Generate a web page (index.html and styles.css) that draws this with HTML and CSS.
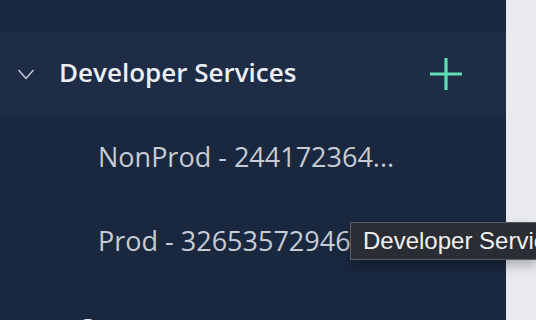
FILE: index.html
```html
<!DOCTYPE html>
<html lang="en">
<head>
  <meta charset="UTF-8" />
  <title>Accounts</title>
  <link rel="stylesheet" href="styles.css">
</head>
<body>

  <div class="sidebar">
    <div class="tree">

      <div class="section-end"></div>

      <div class="group-row active">
        <span class="chevron">
          <svg width="18" height="12" viewBox="0 0 18 12"><path d="M1.5 2 L9 10.5 L16.5 2" fill="none" stroke="#c9ced8" stroke-width="1.4"/></svg>
        </span>
        <span class="group-name">Developer Services</span>
        <button class="add-btn" title="Add account">
          <svg width="34" height="34" viewBox="0 0 34 34"><path d="M17 1 V33 M1 17 H33" stroke="#5fe0b4" stroke-width="3.2"/></svg>
        </button>
      </div>

      <div class="account-row">NonProd - 244172364...</div>
      <div class="account-row">Prod - 326535729461</div>

      <div class="group-row collapsed">
        <span class="chevron">
          <svg width="12" height="18" viewBox="0 0 12 18"><path d="M2 1.5 L10.5 9 L2 16.5" fill="none" stroke="#c9ced8" stroke-width="1.4"/></svg>
        </span>
        <span class="group-name indent">Consumer</span>
      </div>

    </div>
  </div>

  <div class="tooltip">Developer Services</div>

</body>
</html>
```

FILE: styles.css
```css
:root {
  --side-bg: #19273f;
  --side-active: #1e2c46;
  --page-bg: #e8eaee;
  --text-main: #eceef2;
  --text-sub: #c6cbd4;
  --accent: #5fe0b4;
}

html {
  overflow: hidden;
}

body {
  margin: 0;
  height: 320px;
  overflow: hidden;
  background-color: var(--page-bg);
  font-family: 'Open Sans', sans-serif;
  display: flex;
}

.sidebar {
  width: 506px;
  height: 100%;
  background-color: var(--side-bg);
  overflow: hidden;
}

.section-end {
  height: 32px;
}

.group-row {
  display: flex;
  align-items: center;
  height: 84px;
  box-sizing: border-box;
  padding: 0 30px 0 17px;
  color: var(--text-main);
}

.group-row.active {
  background-color: var(--side-active);
}

.group-row.collapsed {
  padding-top: 6px;
}

.chevron {
  width: 42px;
  display: flex;
  align-items: center;
}

.group-name {
  flex: 1;
  font-size: 26px;
  font-weight: 600;
  margin-top: -4px;
  white-space: nowrap;
}

.group-name.indent {
  padding-left: 18px;
}

.add-btn {
  background: none;
  border: none;
  padding: 0;
  margin-right: 13px;
  display: flex;
  cursor: pointer;
}

.account-row {
  height: 84px;
  display: flex;
  align-items: center;
  padding-left: 98px;
  padding-bottom: 4px;
  box-sizing: border-box;
  font-size: 27px;
  color: var(--text-sub);
  white-space: nowrap;
}

.tooltip {
  position: absolute;
  left: 350px;
  top: 222px;
  box-sizing: border-box;
  max-width: calc(100vw - 350px);
  height: 38px;
  padding: 0 0 0 12px;
  display: flex;
  align-items: center;
  overflow: hidden;
  background-color: #2a2d33;
  border: 1px solid #5a5d63;
  border-right: none;
  color: #f0f0f0;
  font-family: 'Liberation Sans', sans-serif;
  font-size: 24px;
  white-space: nowrap;
  box-shadow: 0 6px 10px rgba(0, 0, 0, 0.25);
}
```
